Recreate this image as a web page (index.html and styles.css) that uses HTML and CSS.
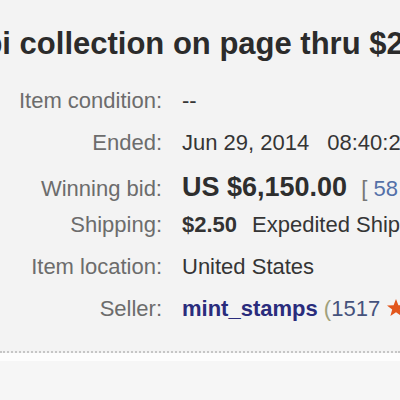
FILE: index.html
```html
<!DOCTYPE html>
<html lang="en">
<head>
    <meta charset="UTF-8">
    <title>Abu Dhabi collection</title>
    <link rel="stylesheet" href="styles.css">
</head>
<body>

<div class="item">
    <h1 class="item-title">Abu Dhabi collection on page thru $2,000</h1>

    <div class="details">
        <div class="row">
            <div class="label">Item condition:</div>
            <div class="value">--</div>
        </div>
        <div class="row">
            <div class="label">Ended:</div>
            <div class="value">Jun 29, 2014<span class="time">08:40:21 PDT</span></div>
        </div>
        <div class="row bid-row">
            <div class="label">Winning bid:</div>
            <div class="value"><span class="price">US $6,150.00</span> <span class="bracket">[</span> <a class="bids" href="#">58 bids</a> <span class="bracket">]</span></div>
        </div>
        <div class="row">
            <div class="label">Shipping:</div>
            <div class="value"><b class="ship-cost">$2.50</b><span class="ship-type">Expedited Shipping</span></div>
        </div>
        <div class="row">
            <div class="label">Item location:</div>
            <div class="value">United States</div>
        </div>
        <div class="row">
            <div class="label">Seller:</div>
            <div class="value">
                <a class="seller" href="#">mint_stamps</a> <span class="paren">(</span><a class="score" href="#">1517</a>
                <svg class="star" width="20" height="20" viewBox="0 0 20 20"><path d="M10 1 L12.4 7.3 L19 7.5 L13.8 11.6 L15.6 18 L10 14.3 L4.4 18 L6.2 11.6 L1 7.5 L7.6 7.3 Z" fill="#e2561c"/></svg>
            </div>
        </div>
    </div>
</div>

<div class="footer"></div>

</body>
</html>
```

FILE: styles.css
```css
body {
    margin: 0;
    background-color: #f3f3f3;
    font-family: "Liberation Sans", Arial, sans-serif;
    overflow: hidden;
    white-space: nowrap;
}

.item {
    padding-top: 25px;
    padding-bottom: 29px;
    border-bottom: 2px dotted #c6c6c6;
}

.item-title {
    margin: 0 0 25px -144px;
    font-size: 31px;
    line-height: 38px;
    font-weight: bold;
    color: #2b2b2b;
}

.details {
    display: flex;
    flex-direction: column;
    gap: 16px;
}

.row {
    display: grid;
    grid-template-columns: 162px auto;
    column-gap: 20px;
    align-items: baseline;
    font-size: 22px;
    line-height: 26px;
}

.bid-row {
    margin-top: 4px;
    margin-bottom: -6px;
}

.label {
    text-align: right;
    color: #6c6c6c;
}

.value {
    color: #353535;
}

.time {
    margin-left: 18px;
}

.price {
    font-size: 27px;
    line-height: 20px;
    font-weight: bold;
    color: #2e2e2e;
}

.price + .bracket {
    margin-left: 8px;
}

.bracket {
    color: #777;
}

.bids {
    color: #5470a8;
    text-decoration: none;
}

.ship-cost {
    color: #333;
}

.ship-type {
    margin-left: 15px;
}

.seller {
    font-weight: bold;
    color: #2a2c7c;
    text-decoration: none;
}

.paren {
    color: #a0a07a;
}

.score {
    color: #45527c;
    text-decoration: none;
}

.star {
    vertical-align: -2px;
}

.footer {
    height: 60px;
    border-top: 8px solid #fdfdfd;
    background-color: #f6f6f6;
}
```
